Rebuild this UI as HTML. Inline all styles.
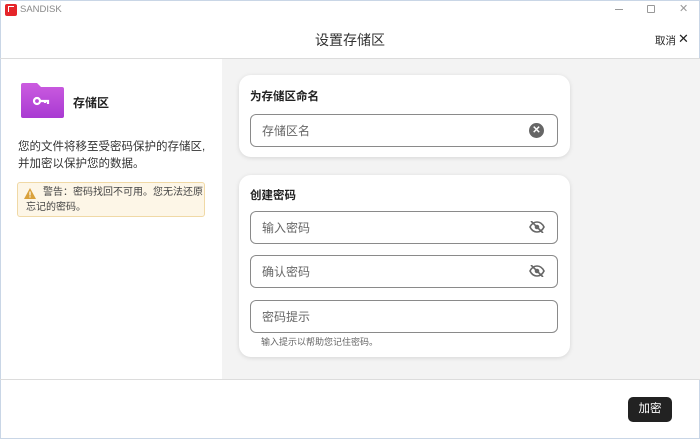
<!DOCTYPE html>
<html><head><meta charset="utf-8"><style>
*{margin:0;padding:0;box-sizing:border-box}
body{width:700px;height:439px;overflow:hidden;font-family:"Liberation Sans","Noto Sans CJK SC",sans-serif;background:#fff;position:relative;color:#222}
.abs{position:absolute}
.card{position:absolute;left:239px;width:331px;background:#fff;border-radius:12px;box-shadow:0 1px 5px rgba(0,0,0,.12)}
.inp{position:absolute;left:11px;width:308px;height:33px;border:1px solid #8a8a8a;border-radius:6px;font-size:12px;color:#666;padding:7px 0 0 11px}
.lbl{position:absolute;left:11px;font-size:11.5px;font-weight:bold;color:#222}
</style></head><body>
<div class="abs" style="left:0;top:0;width:700px;height:439px;border:1px solid #c9d6e6"></div>
<div class="abs" style="left:5px;top:4px;width:12px;height:12px;background:#e5252a;border-radius:2px"></div>
<div class="abs" style="left:8px;top:6px;width:6px;height:6px;border:1.5px solid #fff;border-right:none;border-bottom:none"></div>
<div class="abs" style="left:20px;top:4px;font-size:9.5px;color:#888">SANDISK</div>
<div class="abs" style="left:615px;top:9px;width:8px;height:1px;background:#999"></div>
<div class="abs" style="left:647px;top:5px;width:8px;height:8px;border:1px solid #999;border-radius:1px"></div>
<div class="abs" style="left:679px;top:2px;font-size:11px;color:#999">✕</div>
<div class="abs" style="left:0;top:30px;width:700px;text-align:center;font-size:14px;color:#333">设置存储区</div>
<div class="abs" style="left:655px;top:33px;font-size:10.5px;color:#222">取消</div>
<div class="abs" style="left:678px;top:31px;font-size:13px;color:#222">✕</div>
<div class="abs" style="left:0;top:58px;width:700px;height:1px;background:#dcdcdc"></div>
<div class="abs" style="left:222px;top:59px;width:478px;height:320px;background:#f3f3f3"></div>
<div class="abs" style="left:0;top:379px;width:700px;height:1px;background:#dcdcdc"></div>
<svg class="abs" style="left:21px;top:83px" width="43" height="35" viewBox="0 0 43 35"><defs><linearGradient id="g" x1="0" y1="0" x2="0" y2="1"><stop offset="0" stop-color="#cc5ce0"/><stop offset="1" stop-color="#a93ad2"/></linearGradient></defs><path d="M2 0h14l4 4h21a2 2 0 0 1 2 2v27a2 2 0 0 1-2 2H2a2 2 0 0 1-2-2V2a2 2 0 0 1 2-2z" fill="url(#g)"/><circle cx="16" cy="18" r="3" fill="none" stroke="#fff" stroke-width="2.2"/><path d="M19 18h8v3M24 18v2" stroke="#fff" stroke-width="2.2" fill="none"/></svg>
<div class="abs" style="left:73px;top:94px;font-size:12px;font-weight:bold">存储区</div>
<div class="abs" style="left:18px;top:139px;font-size:11.5px;line-height:17px;color:#333;width:200px;white-space:nowrap">您的文件将移至受密码保护的存储区,<br>并加密以保护您的数据。</div>
<div class="abs" style="left:17px;top:182px;width:188px;height:35px;background:#fdf6e7;border:1px solid #f0d9a6;border-radius:3px"></div>
<svg class="abs" style="left:24px;top:188px" width="12" height="11" viewBox="0 0 12 11"><path d="M6 0L12 11H0z" fill="#d9a13b"/><rect x="5.4" y="3.5" width="1.2" height="4" fill="#fff"/><rect x="5.4" y="8.3" width="1.2" height="1.2" fill="#fff"/></svg>
<div class="abs" style="left:43px;top:185px;font-size:10px;line-height:15px;color:#444;white-space:nowrap">警告：密码找回不可用。您无法还原</div>
<div class="abs" style="left:26px;top:200px;font-size:10px;line-height:15px;color:#444;white-space:nowrap">忘记的密码。</div>
<div class="card" style="top:75px;height:82px">
<div class="lbl" style="top:13px">为存储区命名</div>
<div class="inp" style="top:39px">存储区名</div>
<div class="abs" style="left:290px;top:48px;width:15px;height:15px;border-radius:50%;background:#666;color:#fff;font-size:10px;font-weight:bold;text-align:center;line-height:15px">✕</div>
</div>
<div class="card" style="top:175px;height:182px">
<div class="lbl" style="top:12px">创建密码</div>
<div class="inp" style="top:36px">输入密码</div>
<div class="inp" style="top:80px">确认密码</div>
<div class="inp" style="top:125px">密码提示</div>
<div class="abs" style="left:22px;top:160px;font-size:9px;color:#666">输入提示以帮助您记住密码。</div>
<svg class="abs" style="left:290px;top:46px" width="16" height="12" viewBox="0 0 16 12"><path d="M1 6C3 2 6 1 8 1s5 1 7 5c-2 4-5 5-7 5S3 10 1 6z" fill="none" stroke="#666" stroke-width="1.6"/><circle cx="8" cy="6" r="2.3" fill="#666"/><path d="M2 0l12 12" stroke="#666" stroke-width="1.6"/></svg>
<svg class="abs" style="left:290px;top:90px" width="16" height="12" viewBox="0 0 16 12"><path d="M1 6C3 2 6 1 8 1s5 1 7 5c-2 4-5 5-7 5S3 10 1 6z" fill="none" stroke="#666" stroke-width="1.6"/><circle cx="8" cy="6" r="2.3" fill="#666"/><path d="M2 0l12 12" stroke="#666" stroke-width="1.6"/></svg>
</div>
<div class="abs" style="left:628px;top:397px;width:44px;height:25px;background:#222;border-radius:5px;color:#fff;font-size:11.5px;text-align:center;line-height:25px">加密</div>
</body></html>
